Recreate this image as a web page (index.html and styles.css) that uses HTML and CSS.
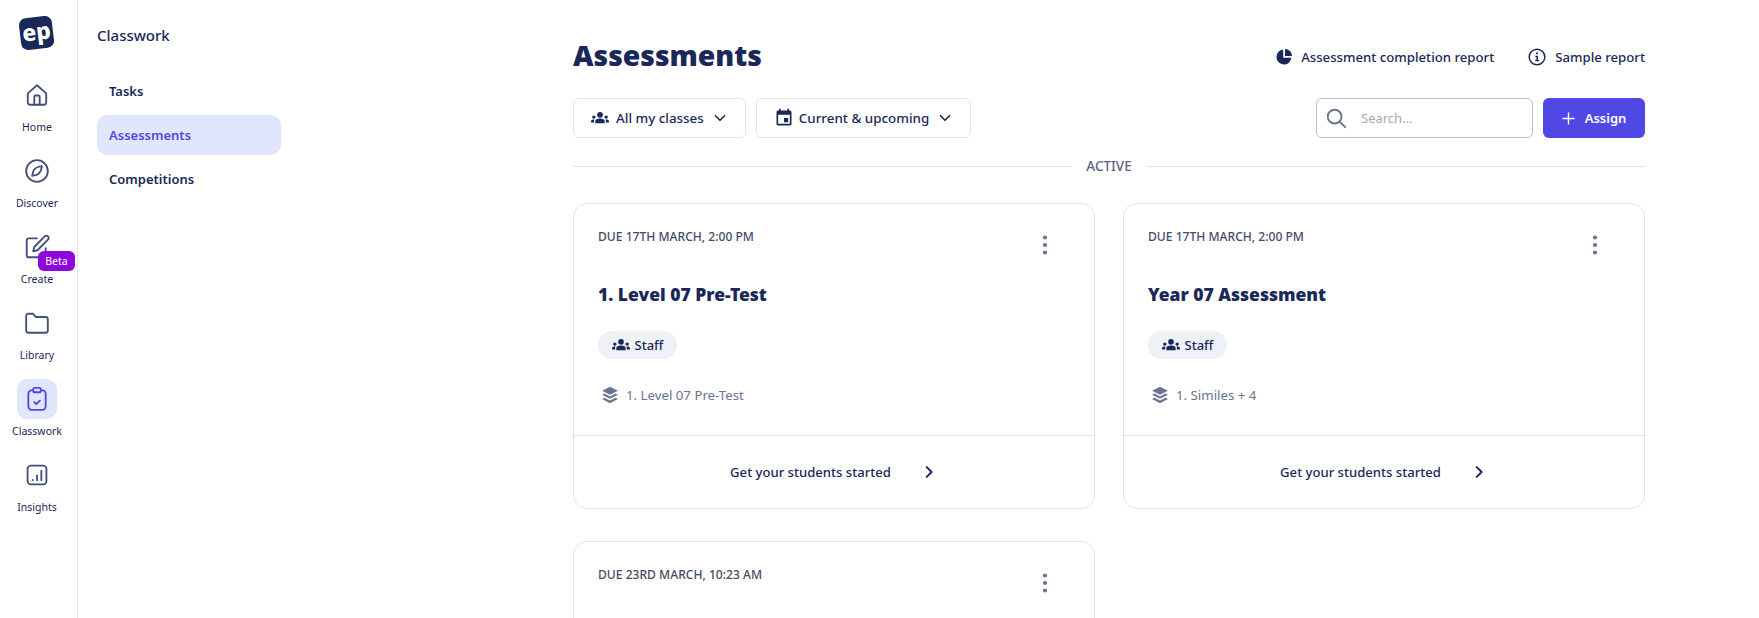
FILE: index.html
```html
<!DOCTYPE html>
<html lang="en">
<head>
    <meta charset="UTF-8">
    <title>Assessments</title>
    <link rel="stylesheet" href="styles.css">
</head>
<body>
    <svg class="icon-defs" width="0" height="0">
        <symbol id="i-groups" viewBox="0 0 24 24"><circle cx="12" cy="7.800" r="3.800"/><circle cx="3.800" cy="10.800" r="2.300"/><circle cx="20.200" cy="10.800" r="2.300"/><path d="M12 12.800c2 0 3.500.4 4.600 1 1 .5 1.600 1.500 1.600 2.600V19H5.800v-2.600c0-1.100.6-2.100 1.600-2.600 1.100-.6 2.600-1 4.600-1z"/><path d="M4.700 14.200c-.4.700-.6 1.400-.6 2.200V18H0v-1.600c0-.9.500-1.600 1.300-1.900.9-.4 2.100-.6 3.400-.3zM19.300 14.200c.4.700.6 1.400.6 2.200V18H24v-1.600c0-.9-.5-1.600-1.300-1.900-.9-.4-2.100-.6-3.400-.3z"/></symbol>
        <symbol id="i-layers" viewBox="0 0 24 24"><path d="M12 2 2.500 6.800 12 11.600l9.500-4.800z"/><path d="M5.300 10.300 2.500 11.800 12 16.600l9.500-4.800-2.800-1.500-6.700 3.400z"/><path d="M5.300 15.300 2.500 16.800 12 22l9.500-5.200-2.800-1.500-6.700 3.400z"/></symbol>
        <symbol id="i-chevron-down" viewBox="0 0 24 24"><path d="M6 9l6 6 6-6" fill="none" stroke="currentColor" stroke-width="2.200" stroke-linecap="round" stroke-linejoin="round"/></symbol>
        <symbol id="i-chevron-right" viewBox="0 0 24 24"><path d="M9 5.500l6.500 6.500L9 18.500" fill="none" stroke="currentColor" stroke-width="2.600" stroke-linecap="round" stroke-linejoin="round"/></symbol>
        <symbol id="i-dots" viewBox="0 0 24 24"><circle cx="12" cy="4.500" r="2.100"/><circle cx="12" cy="12" r="2.100"/><circle cx="12" cy="19.500" r="2.100"/></symbol>
    </svg>

    <div class="app">
        <!-- icon rail -->
        <nav class="rail">
            <div class="logo"><span>ep</span></div>
            <a class="rail-item">
                <span class="rail-icon">
                    <svg viewBox="0 0 24 24"><path d="M3.500 10.500 12 3l8.500 7.500V19a2 2 0 0 1-2 2h-13a2 2 0 0 1-2-2z"/><path d="M9.500 21v-7.500a1 1 0 0 1 1-1h3a1 1 0 0 1 1 1V21"/></svg>
                </span>
                <span class="rail-label">Home</span>
            </a>
            <a class="rail-item">
                <span class="rail-icon">
                    <svg viewBox="0 0 24 24"><circle cx="12" cy="12" r="10"/><path d="M16.500 7.500c-3.600.4-6.900 1.600-8 4.900l-1 4.100 4.100-1c3.300-1.100 4.500-4.400 4.900-8z"/></svg>
                </span>
                <span class="rail-label">Discover</span>
            </a>
            <a class="rail-item">
                <span class="rail-icon">
                    <svg viewBox="0 0 24 24"><path d="M12 4H4.500a2 2 0 0 0-2 2v13.500a2 2 0 0 0 2 2H18a2 2 0 0 0 2-2V13"/><path d="M19.500 1.800a2.200 2.200 0 0 1 3 3L12.500 15l-4 1 1-4z"/></svg>
                </span>
                <span class="badge">Beta</span>
                <span class="rail-label">Create</span>
            </a>
            <a class="rail-item">
                <span class="rail-icon">
                    <svg viewBox="0 0 24 24"><path d="M2 5.500a2 2 0 0 1 2-2h4.500l2.500 3h9a2 2 0 0 1 2 2V19a2 2 0 0 1-2 2H4a2 2 0 0 1-2-2z"/></svg>
                </span>
                <span class="rail-label">Library</span>
            </a>
            <a class="rail-item active">
                <span class="rail-icon">
                    <svg viewBox="0 0 24 24"><rect x="4" y="4" width="16" height="18" rx="3"/><rect x="8.500" y="1.800" width="7" height="4" rx="1.500" fill="#e0e6fc"/><path d="M9.500 15l1.800 1.800 3.400-3.300"/></svg>
                </span>
                <span class="rail-label">Classwork</span>
            </a>
            <a class="rail-item">
                <span class="rail-icon">
                    <svg viewBox="0 0 24 24"><rect x="3.300" y="3.300" width="17.400" height="17.400" rx="3"/><path d="M8 16.800v-.3M12 16.800v-4.300M16 16.800V8"/></svg>
                </span>
                <span class="rail-label">Insights</span>
            </a>
        </nav>

        <!-- section menu -->
        <aside class="subnav">
            <h2 class="subnav-title">Classwork</h2>
            <a class="subnav-link">Tasks</a>
            <a class="subnav-link active">Assessments</a>
            <a class="subnav-link">Competitions</a>
        </aside>

        <main class="content">
            <header class="page-head">
                <h1>Assessments</h1>
                <div class="reports">
                    <a class="report-link">
                        <svg class="icon-16" viewBox="0 0 16 16"><path d="M7.200.6v8.200h8.200A7.500 7.500 0 1 1 7.200.6z"/><path d="M9 0a7 7 0 0 1 7 7H9z"/></svg>
                        Assessment completion report
                    </a>
                    <a class="report-link">
                        <svg class="icon-18" viewBox="0 0 18 18"><circle cx="9" cy="9" r="7.800" fill="none" stroke="currentColor" stroke-width="1.500"/><circle cx="9" cy="5.300" r="1.100"/><path d="M7.300 7.700H10v4.200h1v1.300H7.200v-1.300h1.200V9H7.300z"/></svg>
                        Sample report
                    </a>
                </div>
            </header>

            <div class="toolbar">
                <button class="filter">
                    <svg class="icon-18"><use href="#i-groups"/></svg>
                    All my classes
                    <svg class="icon-chevron"><use href="#i-chevron-down"/></svg>
                </button>
                <button class="filter">
                    <svg class="icon-20 icon-event" viewBox="0 0 24 24"><path d="M17 12h-5v5h5v-5zM16 1v2H8V1H6v2H5c-1.110 0-1.990.9-1.990 2L3 19c0 1.100.89 2 2 2h14c1.100 0 2-.9 2-2V5c0-1.100-.9-2-2-2h-1V1h-2zm3 18H5V8h14v11z"/></svg>
                    Current &amp; upcoming
                    <svg class="icon-chevron"><use href="#i-chevron-down"/></svg>
                </button>
                <label class="search">
                    <svg viewBox="0 0 24 24"><circle cx="10.500" cy="10.500" r="7.500"/><path d="M16 16l6 6"/></svg>
                    <input type="text" placeholder="Search...">
                </label>
                <button class="assign">
                    <svg class="plus" viewBox="0 0 14 14"><path d="M7 .5v13M.5 7h13"/></svg>
                    Assign
                </button>
            </div>

            <div class="divider"><span>ACTIVE</span></div>

            <div class="cards">
                <article class="card">
                    <div class="card-body">
                        <div class="card-top">
                            <span class="due">Due 17th March, 2:00 PM</span>
                            <svg class="dots"><use href="#i-dots"/></svg>
                        </div>
                        <h3>1. Level 07 Pre-Test</h3>
                        <span class="chip"><svg class="icon-18"><use href="#i-groups"/></svg>Staff</span>
                        <div class="meta"><svg class="icon-20"><use href="#i-layers"/></svg>1. Level 07 Pre-Test</div>
                    </div>
                    <a class="card-foot">Get your students started<svg class="icon-chevron"><use href="#i-chevron-right"/></svg></a>
                </article>

                <article class="card">
                    <div class="card-body">
                        <div class="card-top">
                            <span class="due">Due 17th March, 2:00 PM</span>
                            <svg class="dots"><use href="#i-dots"/></svg>
                        </div>
                        <h3>Year 07 Assessment</h3>
                        <span class="chip"><svg class="icon-18"><use href="#i-groups"/></svg>Staff</span>
                        <div class="meta"><svg class="icon-20"><use href="#i-layers"/></svg>1. Similes + 4</div>
                    </div>
                    <a class="card-foot">Get your students started<svg class="icon-chevron"><use href="#i-chevron-right"/></svg></a>
                </article>

                <article class="card">
                    <div class="card-body">
                        <div class="card-top">
                            <span class="due">Due 23rd March, 10:23 AM</span>
                            <svg class="dots"><use href="#i-dots"/></svg>
                        </div>
                    </div>
                </article>
            </div>
        </main>
    </div>
</body>
</html>
```

FILE: styles.css
```css
* {
    box-sizing: border-box;
}
html, body {
    height: 100%;
}
body {
    margin: 0;
    overflow: hidden;
    background-color: #fff;
    color: #1a2859;
    font-family: "Noto Sans", Arial, sans-serif;
    font-size: 14px;
}
svg {
    fill: currentColor;
    flex: none;
}
.icon-defs {
    position: absolute;
}
.icon-16 { width: 16px; height: 16px; }
.icon-18 { width: 18px; height: 18px; }
.icon-20 { width: 20px; height: 20px; }
.icon-chevron { width: 18px; height: 18px; }

.app {
    display: flex;
    height: 618px;
    overflow: hidden;
}

/* rail */
.rail {
    width: 78px;
    flex: none;
    border-right: 1px solid #e2e3ea;
    padding: 15px 3px 0 0;
    display: flex;
    flex-direction: column;
    align-items: center;
}
.logo {
    width: 33px;
    height: 32px;
    margin: 2px 2px 26px 0;
    border-radius: 7px;
    background-color: #1a2859;
    color: #fff;
    transform: rotate(-7deg);
    display: flex;
    align-items: center;
    justify-content: center;
    font-weight: 800;
    font-size: 23px;
    line-height: 1;
}
.logo span {
    margin-top: -4px;
}
.rail-item {
    position: relative;
    width: 74px;
    height: 76px;
    display: flex;
    flex-direction: column;
    align-items: center;
}
.rail-icon {
    width: 40px;
    height: 40px;
    border-radius: 10px;
    display: flex;
    align-items: center;
    justify-content: center;
    color: #44507a;
}
.rail-icon svg {
    width: 26px;
    height: 26px;
    fill: none;
    stroke: currentColor;
    stroke-width: 1.700;
    stroke-linecap: round;
    stroke-linejoin: round;
}
.rail-label {
    margin-top: 4px;
    font-size: 10.500px;
    line-height: 16px;
    color: #1a2859;
}
.rail-item.active .rail-icon {
    background-color: #e0e6fc;
    color: #5048e5;
}
.badge {
    position: absolute;
    left: 38px;
    top: 24px;
    width: 37px;
    height: 20px;
    border-radius: 6px;
    background-color: #8f06dc;
    color: #fff;
    font-size: 10.500px;
    line-height: 20px;
    text-align: center;
}

/* section menu */
.subnav {
    width: 222px;
    flex: none;
    padding: 23px 19px 0;
}
.subnav-title {
    margin: 0 0 24px;
    font-size: 15px;
    font-weight: 500;
    line-height: 24px;
}
.subnav-link {
    display: block;
    height: 40px;
    margin-bottom: 4px;
    padding-left: 12px;
    border-radius: 10px;
    font-size: 13px;
    font-weight: 600;
    line-height: 40px;
}
.subnav-link.active {
    background-color: #e0e6fc;
    color: #5048e5;
}

/* main */
.content {
    flex: 1;
    padding: 36px 114px 0 273px;
}
.page-head {
    display: flex;
    justify-content: space-between;
    align-items: center;
    height: 42px;
}
h1 {
    margin: 0;
    align-self: flex-start;
    font-size: 28.300px;
    font-weight: 900;
    line-height: 38px;
}
.reports {
    display: flex;
    gap: 34px;
}
.report-link {
    display: flex;
    align-items: center;
    gap: 9px;
    font-size: 13.200px;
    font-weight: 500;
}
.toolbar {
    display: flex;
    gap: 10px;
    margin-top: 20px;
}
.filter {
    height: 40px;
    display: flex;
    align-items: center;
    gap: 7px;
    padding: 0 16px 0 17px;
    background: #fff;
    border: 1px solid #e2e3ea;
    border-radius: 6px;
    color: inherit;
    font: 500 13.400px "Noto Sans", Arial, sans-serif;
}
.filter .icon-event {
    margin-right: -2px;
}
.search {
    margin-left: auto;
    width: 217px;
    height: 40px;
    display: flex;
    align-items: center;
    gap: 12px;
    padding-left: 8px;
    border: 1px solid #b8bbcd;
    border-radius: 6px;
}
.search svg {
    width: 22px;
    height: 22px;
    fill: none;
    stroke: #6b7390;
    stroke-width: 2;
    stroke-linecap: round;
}
.search input {
    flex: 1;
    min-width: 0;
    border: 0;
    outline: 0;
    font: 13px "Noto Sans", Arial, sans-serif;
}
.search input::placeholder {
    color: #a5a9bb;
}
.assign {
    width: 102px;
    height: 40px;
    display: flex;
    align-items: center;
    justify-content: center;
    gap: 10px;
    background-color: #5048e5;
    border: 0;
    border-radius: 6px;
    color: #fff;
    font: 600 13px "Noto Sans", Arial, sans-serif;
}
.plus {
    width: 13px;
    height: 13px;
    fill: none;
    stroke: currentColor;
    stroke-width: 1.500;
}
.divider {
    display: flex;
    align-items: center;
    gap: 15px;
    margin-top: 17px;
    height: 22px;
    color: #5b6483;
    font-size: 13.500px;
    font-weight: 500;
}
.divider::before, .divider::after {
    content: "";
    flex: 1;
    height: 1px;
    background-color: #e2e3ea;
}
.cards {
    display: grid;
    grid-template-columns: 522px 522px;
    column-gap: 28px;
    row-gap: 32px;
    margin-top: 26px;
}
.card {
    border: 1px solid #e2e3ea;
    border-radius: 14px;
}
.card-body {
    height: 231px;
    padding: 25px 24px 0;
}
.card-top {
    display: flex;
    justify-content: space-between;
}
.due {
    font-size: 12.100px;
    font-weight: 500;
    line-height: 16px;
    color: #454b66;
    text-transform: uppercase;
}
.dots {
    width: 24px;
    height: 24px;
    margin: 4px 13px 0 0;
    fill: #6b7390;
}
h3 {
    margin: 25px 0 25px;
    font-size: 17.500px;
    font-weight: 900;
    line-height: 24px;
}
.chip {
    display: inline-flex;
    align-items: center;
    gap: 5px;
    height: 28px;
    padding: 0 13.500px;
    border-radius: 14px;
    background-color: #eef1f6;
    font-size: 13px;
    font-weight: 500;
}
.meta {
    display: flex;
    align-items: center;
    gap: 6px;
    margin-top: 26px;
    padding-left: 2px;
    color: #6b7390;
    font-size: 13.250px;
}
.card-foot {
    height: 73px;
    border-top: 1px solid #e2e3ea;
    display: flex;
    align-items: center;
    justify-content: center;
    gap: 29px;
    font-size: 13.100px;
    font-weight: 500;
}
```
